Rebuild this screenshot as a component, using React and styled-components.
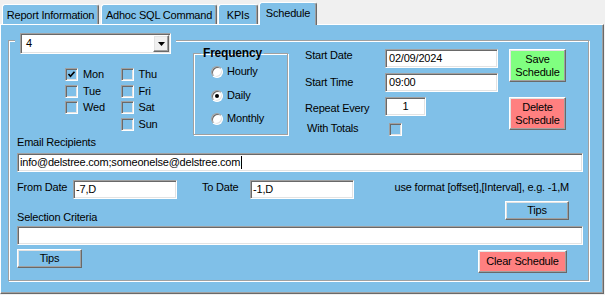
import styled, { createGlobalStyle, css } from "styled-components";

const BLUE = "#80c0e8";

const GlobalStyle = createGlobalStyle`
  html, body { margin: 0; padding: 0; background: #f0f0f0; }
  body {
    font-family: "Liberation Sans", Arial, sans-serif;
    font-size: 11px;
    letter-spacing: -0.2px;
    color: #000;
  }
  * { box-sizing: border-box; }
`;

const sunken = css`
  border: 1px solid;
  border-color: #a0a0a0 #ffffff #ffffff #a0a0a0;
  box-shadow: inset 1px 1px 0 #696969, inset -1px -1px 0 #e3e3e3;
`;

const raised = css`
  border: 1px solid;
  border-color: #ffffff #696969 #696969 #ffffff;
  box-shadow: inset -1px -1px 0 #a0a0a0, inset 1px 1px 0 #e3e3e3;
`;

const etched = css`
  border: 1px solid #a0a0a0;
  box-shadow: 1px 1px 0 #ffffff, inset 1px 1px 0 #ffffff;
`;

const Window = styled.div`
  width: 605px;
  height: 295px;
  overflow: hidden;
  background: #f0f0f0;
`;

const TabStrip = styled.div`
  display: flex;
  align-items: flex-end;
  height: 24px;
`;

const Tab = styled.div`
  flex: none;
  width: ${(p) => p.$w}px;
  margin-left: ${(p) => p.$ml}px;
  height: ${(p) => (p.$active ? 23 : 20)}px;
  margin-bottom: ${(p) => (p.$active ? -1 : 0)}px;
  position: relative;
  z-index: ${(p) => (p.$active ? 2 : 0)};
  background: ${BLUE};
  border-top: 1px solid #fff;
  border-left: 1px solid #fff;
  border-right: 1px solid #696969;
  box-shadow: inset -1px 0 0 #a0a0a0;
  border-radius: 3px 3px 0 0;
  padding-top: 4px;
  line-height: 13px;
  text-align: center;
  white-space: nowrap;
`;

const Panel = styled.div`
  width: 604px;
  height: 270px;
  background: ${BLUE};
  border-top: 1px solid #fff;
  border-left: 1px solid #fff;
  border-right: 1px solid #696969;
  border-bottom: 1px solid #696969;
  box-shadow: inset -1px -1px 0 #a0a0a0;
  padding: 15px 0 0 7px;
`;

const Frame = styled.div`
  ${etched}
  width: 581px;
  height: 241px;
  padding: 0 6px 0 8px;
  display: flex;
  flex-direction: column;
`;

const TopRow = styled.div`
  display: flex;
  align-items: flex-start;
  height: 95px;
  margin-left: -8px;
`;

const LeftCol = styled.div`
  flex: none;
  width: 161px;
  margin: -8px 0 0 6px;
`;

const ComboWrap = styled.div`
  background: ${BLUE};
  padding: 0 5px;
`;

const Combo = styled.div`
  ${sunken}
  width: 151px;
  height: 21px;
  background: #fff;
  display: flex;
  align-items: center;
  padding: 1px;
`;

const ComboValue = styled.div`
  flex: 1;
  padding-left: 4px;
  line-height: 13px;
`;

const DropButton = styled.div`
  ${raised}
  width: 16px;
  height: 17px;
  background: #f0f0f0;
  display: flex;
  align-items: center;
  justify-content: center;
`;

const DaysGrid = styled.div`
  display: flex;
  margin: 14px 0 0 50px;
`;

const DayCol = styled.div`
  display: flex;
  flex-direction: column;
  width: 64px;
`;

const OptionRow = styled.div`
  display: flex;
  align-items: flex-start;
  gap: ${(p) => p.$gap ?? 5}px;
  height: ${(p) => p.$h ?? 16.6}px;
  line-height: 13px;
  white-space: nowrap;
`;

const CheckBox = styled.span`
  ${sunken}
  flex: none;
  width: 13px;
  height: 13px;
  margin-top: ${(p) => p.$mt ?? 0}px;
  margin-left: ${(p) => p.$ml ?? 0}px;
  display: flex;
  align-items: center;
  justify-content: center;
`;

const FreqSet = styled.fieldset`
  ${etched}
  flex: none;
  width: 95px;
  margin: 5px 0 0 17px;
  padding: 0 0 9px 0;
`;

const FreqLegend = styled.legend`
  margin-left: 7px;
  padding: 0 2px;
  font-size: 12px;
  font-weight: bold;
  line-height: 14px;
`;

const RadioList = styled.div`
  display: flex;
  flex-direction: column;
  gap: 11.5px;
  padding: 6px 0 0 17px;
`;

const Radio = styled.span`
  flex: none;
  width: 12px;
  height: 12px;
  border-radius: 50%;
  background: #fff;
  border: 1px solid;
  border-color: #a0a0a0 #fff #fff #a0a0a0;
  box-shadow: inset 1px 1px 0 #696969, inset -1px -1px 0 #e3e3e3;
  display: flex;
  align-items: center;
  justify-content: center;
  &::after {
    content: "";
    display: ${(p) => (p.$on ? "block" : "none")};
    width: 4px;
    height: 4px;
    border-radius: 50%;
    background: #000;
  }
`;

const RadioText = styled.span`
  margin-top: -1px;
`;

const LabelCol = styled.div`
  flex: none;
  width: 80px;
  margin-left: 17px;
  display: flex;
  flex-direction: column;
`;

const FieldLabel = styled.div`
  flex: none;
  width: ${(p) => (p.$w ? `${p.$w}px` : "auto")};
  margin-top: ${(p) => p.$mt ?? 0}px;
  margin-left: ${(p) => p.$ml ?? 0}px;
  line-height: 13px;
  white-space: nowrap;
`;

const InputCol = styled.div`
  flex: none;
  display: flex;
  flex-direction: column;
  gap: 5px;
  margin-top: 8px;
`;

const TextField = styled.div`
  ${sunken}
  flex: none;
  width: ${(p) => p.$w}px;
  height: 19px;
  margin-top: ${(p) => p.$mt ?? 0}px;
  background: #fff;
  padding: 2px 2px 0 ${(p) => p.$pl ?? 2}px;
  line-height: 13px;
  white-space: nowrap;
  text-align: ${(p) => (p.$center ? "center" : "left")};
`;

const Caret = styled.span`
  display: inline-block;
  width: 1px;
  height: 13px;
  background: #000;
  vertical-align: top;
  margin-left: 1px;
`;

const ButtonCol = styled.div`
  flex: none;
  display: flex;
  flex-direction: column;
  gap: 15px;
  margin: 8px 0 0 11px;
`;

const Button = styled.div`
  ${raised}
  flex: none;
  width: ${(p) => p.$w}px;
  height: ${(p) => p.$h}px;
  margin-top: ${(p) => p.$mt ?? 0}px;
  background: ${(p) => p.$bg || BLUE};
  display: flex;
  align-items: center;
  justify-content: center;
  text-align: center;
  line-height: 13px;
  white-space: nowrap;
`;

const FormRow = styled.div`
  display: flex;
  align-items: flex-start;
  width: ${(p) => p.$w}px;
  margin-top: ${(p) => p.$mt ?? 0}px;
  justify-content: ${(p) => p.$justify || "flex-start"};
`;

const Hint = styled.div`
  margin: 1px 0 0 auto;
  line-height: 13px;
  white-space: nowrap;
`;

function DropArrow() {
  return (
    <svg width="7" height="4" viewBox="0 0 7 4">
      <polygon points="0,0 7,0 3.5,4" fill="#000" />
    </svg>
  );
}

function Tick() {
  return (
    <svg width="9" height="9" viewBox="0 0 9 9">
      <polyline
        points="1.5,4 3.5,6.2 7.5,1.8"
        fill="none"
        stroke="#000"
        strokeWidth="1.7"
      />
    </svg>
  );
}

const tabs = [
  { label: "Report Information", w: 97, ml: 2 },
  { label: "Adhoc SQL Command", w: 116, ml: 2 },
  { label: "KPIs", w: 40, ml: 1 },
  { label: "Schedule", w: 58, ml: 1, active: true },
];

const dayCols = [
  [
    { name: "Mon", checked: true },
    { name: "Tue" },
    { name: "Wed" },
  ],
  [{ name: "Thu" }, { name: "Fri" }, { name: "Sat" }, { name: "Sun" }],
];

const frequencies = [
  { name: "Hourly" },
  { name: "Daily", on: true },
  { name: "Monthly" },
];

export default function App() {
  return (
    <>
      <GlobalStyle />
      <Window>
        <TabStrip>
          {tabs.map((t) => (
            <Tab key={t.label} $w={t.w} $ml={t.ml} $active={t.active}>
              {t.label}
            </Tab>
          ))}
        </TabStrip>
        <Panel>
          <Frame>
            <TopRow>
              <LeftCol>
                <ComboWrap>
                  <Combo>
                    <ComboValue>4</ComboValue>
                    <DropButton>
                      <DropArrow />
                    </DropButton>
                  </Combo>
                </ComboWrap>
                <DaysGrid>
                  {dayCols.map((col, i) => (
                    <DayCol key={i}>
                      {col.map((d) => (
                        <OptionRow key={d.name}>
                          <CheckBox>{d.checked && <Tick />}</CheckBox>
                          <span>{d.name}</span>
                        </OptionRow>
                      ))}
                    </DayCol>
                  ))}
                </DaysGrid>
              </LeftCol>

              <FreqSet>
                <FreqLegend>Frequency</FreqLegend>
                <RadioList>
                  {frequencies.map((f) => (
                    <OptionRow key={f.name} $h={12} $gap={4}>
                      <Radio $on={f.on} />
                      <RadioText>{f.name}</RadioText>
                    </OptionRow>
                  ))}
                </RadioList>
              </FreqSet>

              <LabelCol>
                <FieldLabel $mt={8}>Start Date</FieldLabel>
                <FieldLabel $mt={14}>Start Time</FieldLabel>
                <FieldLabel $mt={13}>Repeat Every</FieldLabel>
                <FieldLabel $mt={7} $ml={2}>
                  With Totals
                </FieldLabel>
              </LabelCol>

              <InputCol>
                <TextField $w={113} $pl={3}>
                  02/09/2024
                </TextField>
                <TextField $w={113} $pl={3}>
                  09:00
                </TextField>
                <TextField $w={41} $center>
                  1
                </TextField>
                <CheckBox $mt={2} $ml={4} />
              </InputCol>

              <ButtonCol>
                <Button $w={57} $h={33} $bg="#80ff80">
                  Save
                  <br />
                  Schedule
                </Button>
                <Button $w={57} $h={33} $bg="#ff8080">
                  Delete
                  <br />
                  Schedule
                </Button>
              </ButtonCol>
            </TopRow>

            <FieldLabel>Email Recipients</FieldLabel>
            <TextField $w={566} $mt={4}>
              info@delstree.com;someonelse@delstree.com
              <Caret />
            </TextField>

            <FormRow $w={552} $mt={8}>
              <FieldLabel $w={56} $mt={1}>
                From Date
              </FieldLabel>
              <TextField $w={104}>-7,D</TextField>
              <FieldLabel $w={48} $mt={1} $ml={25}>
                To Date
              </FieldLabel>
              <TextField $w={104}>-1,D</TextField>
              <Hint>use format [offset],[Interval], e.g. -1,M</Hint>
            </FormRow>

            <FormRow $w={552} $mt={2} $justify="space-between">
              <FieldLabel $mt={10}>Selection Criteria</FieldLabel>
              <Button $w={64} $h={19}>
                Tips
              </Button>
            </FormRow>

            <TextField $w={566} $mt={2} />

            <FormRow $w={550} $mt={4} $justify="space-between">
              <Button $w={65} $h={19}>
                Tips
              </Button>
              <Button $w={89} $h={23} $mt={1} $bg="#ff8080">
                Clear Schedule
              </Button>
            </FormRow>
          </Frame>
        </Panel>
      </Window>
    </>
  );
}
